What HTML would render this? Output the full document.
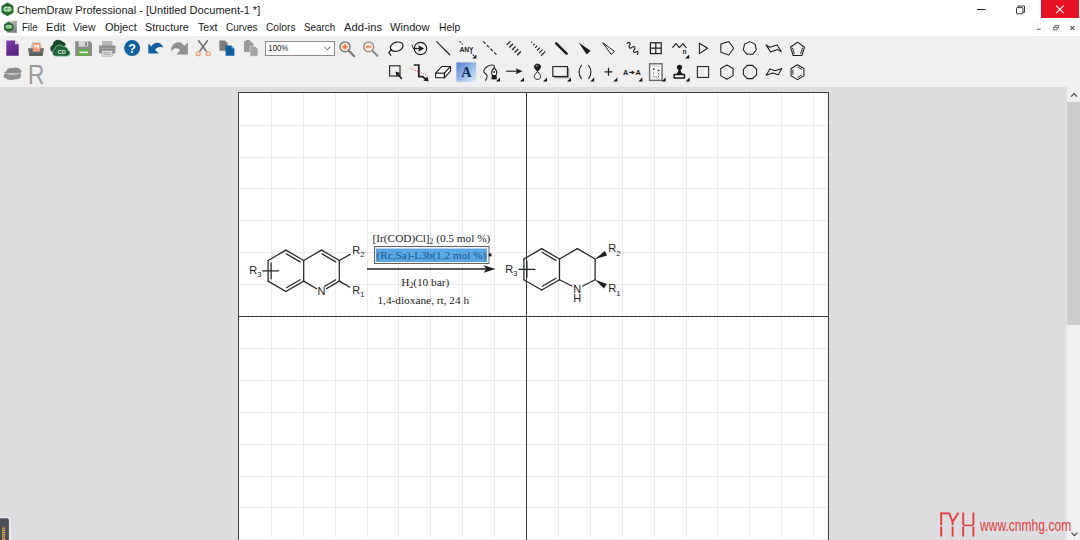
<!DOCTYPE html>
<html lang="en">
<head>
<meta charset="utf-8">
<title>ChemDraw Professional - [Untitled Document-1 *]</title>
<style>
*{box-sizing:border-box;margin:0;padding:0}
html,body{width:1080px;height:540px;overflow:hidden;background:#dddcde;font-family:"Liberation Sans",sans-serif;color:#111}
#app{position:relative;width:1080px;height:540px;overflow:hidden}
.abs{position:absolute}
#titlebar{left:0;top:0;width:1080px;height:19px;background:#fff}
#titletext{left:16.6px;top:2.5px;font-size:11.5px;line-height:15px;color:#1a1a1a;white-space:nowrap;transform-origin:0 50%;transform:scaleX(0.961)}
#menubar{left:0;top:19px;width:1080px;height:17px;background:#fff}
.mi{position:absolute;top:1px;font-size:11.5px;line-height:15px;color:#1a1a1a;white-space:nowrap;transform-origin:0 50%}
#toolbars{left:0;top:36px;width:1080px;height:51px;background:#f0f0f1}
#work{left:0;top:87px;width:1066px;height:453px;background:#dddcde}
#vscroll{left:1066px;top:87px;width:14px;height:453px;background:#f0f0f1}
#vthumb{left:1067px;top:102px;width:13px;height:223px;background:#cdcccf}
#page{left:238px;top:92px;width:591px;height:460px;background:#fff;border:1px solid #3f3f3f}
#closebtn{left:1040.5px;top:0;width:38.2px;height:17.6px;background:#e81123}
svg{position:absolute;left:0;top:0;overflow:visible}
</style>
</head>
<body>
<div id="app">
  <div id="titlebar" class="abs"></div>
  <div id="titletext" class="abs">ChemDraw Professional - [Untitled Document-1 *]</div>
  <div id="closebtn" class="abs"></div>
  <div id="menubar" class="abs">
    <span class="mi" style="left:22px;transform:scaleX(0.836)">File</span>
    <span class="mi" style="left:46.25px;transform:scaleX(0.971)">Edit</span>
    <span class="mi" style="left:73.25px;transform:scaleX(0.91)">View</span>
    <span class="mi" style="left:104.5px;transform:scaleX(0.955)">Object</span>
    <span class="mi" style="left:145px;transform:scaleX(0.937)">Structure</span>
    <span class="mi" style="left:197.5px;transform:scaleX(0.924)">Text</span>
    <span class="mi" style="left:225.5px;transform:scaleX(0.864)">Curves</span>
    <span class="mi" style="left:265.5px;transform:scaleX(0.888)">Colors</span>
    <span class="mi" style="left:303.75px;transform:scaleX(0.858)">Search</span>
    <span class="mi" style="left:343.75px;transform:scaleX(0.974)">Add-ins</span>
    <span class="mi" style="left:390px;transform:scaleX(0.966)">Window</span>
    <span class="mi" style="left:438.75px;transform:scaleX(0.898)">Help</span>
  </div>
  <div id="toolbars" class="abs"></div>
  <div id="work" class="abs"></div>
  <div id="vscroll" class="abs"></div>
  <div id="vthumb" class="abs"></div>
  <div id="page" class="abs"></div>

  <!-- GRID -->
  <svg id="grid" width="1080" height="540" viewBox="0 0 1080 540">
    <g stroke="#ece9f2" stroke-width="1" shape-rendering="crispEdges">
      <line x1="271.5" y1="93" x2="271.5" y2="540"/>
      <line x1="303.5" y1="93" x2="303.5" y2="540"/>
      <line x1="335.5" y1="93" x2="335.5" y2="540"/>
      <line x1="367.5" y1="93" x2="367.5" y2="540"/>
      <line x1="398.5" y1="93" x2="398.5" y2="540"/>
      <line x1="430.5" y1="93" x2="430.5" y2="540"/>
      <line x1="462.5" y1="93" x2="462.5" y2="540"/>
      <line x1="494.5" y1="93" x2="494.5" y2="540"/>
      <line x1="558.5" y1="93" x2="558.5" y2="540"/>
      <line x1="590.5" y1="93" x2="590.5" y2="540"/>
      <line x1="622.5" y1="93" x2="622.5" y2="540"/>
      <line x1="654.5" y1="93" x2="654.5" y2="540"/>
      <line x1="686.5" y1="93" x2="686.5" y2="540"/>
      <line x1="717.5" y1="93" x2="717.5" y2="540"/>
      <line x1="749.5" y1="93" x2="749.5" y2="540"/>
      <line x1="781.5" y1="93" x2="781.5" y2="540"/>
      <line x1="813.5" y1="93" x2="813.5" y2="540"/>
      <line x1="239" y1="125.5" x2="828" y2="125.5"/>
      <line x1="239" y1="157.5" x2="828" y2="157.5"/>
      <line x1="239" y1="188.5" x2="828" y2="188.5"/>
      <line x1="239" y1="220.5" x2="828" y2="220.5"/>
      <line x1="239" y1="252.5" x2="828" y2="252.5"/>
      <line x1="239" y1="284.5" x2="828" y2="284.5"/>
      <line x1="239" y1="348.5" x2="828" y2="348.5"/>
      <line x1="239" y1="380.5" x2="828" y2="380.5"/>
      <line x1="239" y1="412.5" x2="828" y2="412.5"/>
      <line x1="239" y1="444.5" x2="828" y2="444.5"/>
      <line x1="239" y1="476.5" x2="828" y2="476.5"/>
      <line x1="239" y1="507.5" x2="828" y2="507.5"/>
      <line x1="239" y1="539.5" x2="828" y2="539.5"/>
    </g>
    <g stroke="#f3f2f6" fill="none">
      <line x1="239" y1="316.5" x2="828" y2="316.5" stroke-width="7" stroke-dasharray="1 3.4"/>
    </g>
    <g stroke="#3c3c3c" stroke-width="1" shape-rendering="crispEdges">
      <line x1="526.5" y1="93" x2="526.5" y2="540"/>
      <line x1="239" y1="316.5" x2="828" y2="316.5"/>
    </g>
  </svg>

  <!-- CHEM -->
  <svg id="chem" width="1080" height="540" viewBox="0 0 1080 540">
    <g stroke="#262626" stroke-width="1.25" stroke-linecap="round" fill="#1e1e1e" font-family="'Liberation Sans',sans-serif">
    <line x1="285.90" y1="250.10" x2="303.70" y2="260.45"/>
    <line x1="303.70" y1="260.45" x2="303.70" y2="281.15"/>
    <line x1="303.70" y1="281.15" x2="285.90" y2="291.50"/>
    <line x1="285.90" y1="291.50" x2="268.10" y2="281.15"/>
    <line x1="268.10" y1="281.15" x2="268.10" y2="260.45"/>
    <line x1="268.10" y1="260.45" x2="285.90" y2="250.10"/>
    <line x1="286.47" y1="253.90" x2="300.12" y2="261.84"/>
    <line x1="271.10" y1="278.75" x2="271.10" y2="262.85"/>
    <line x1="300.12" y1="279.76" x2="286.47" y2="287.70"/>
    <line x1="303.70" y1="260.45" x2="321.50" y2="250.10"/>
    <line x1="321.50" y1="250.10" x2="339.30" y2="260.45"/>
    <line x1="339.30" y1="260.45" x2="339.30" y2="281.15"/>
    <line x1="322.07" y1="253.90" x2="335.72" y2="261.84"/>
    <line x1="339.30" y1="281.15" x2="326.34" y2="288.69"/>
    <line x1="335.72" y1="279.76" x2="324.66" y2="286.19"/>
    <line x1="303.70" y1="281.15" x2="316.66" y2="288.69"/>
    <text x="321.50" y="294.50" font-size="11" text-anchor="middle" stroke="none">N</text>
    <line x1="339.30" y1="260.45" x2="350.20" y2="254.40"/>
    <line x1="339.30" y1="281.15" x2="349.80" y2="287.30"/>
    <line x1="262.70" y1="270.80" x2="278.80" y2="270.80"/>
    <g stroke="none">
    <text x="352.20" y="253.90" font-size="11">R<tspan font-size="7.6" dy="3.3">2</tspan></text>
    <text x="352.20" y="294.10" font-size="11">R<tspan font-size="7.6" dy="3.3">1</tspan></text>
    <text x="249.30" y="274.00" font-size="11">R<tspan font-size="7.6" dy="3.3">3</tspan></text>
    </g>
    <line x1="541.70" y1="248.65" x2="559.50" y2="259.00"/>
    <line x1="559.50" y1="259.00" x2="559.50" y2="279.70"/>
    <line x1="559.50" y1="279.70" x2="541.70" y2="290.05"/>
    <line x1="541.70" y1="290.05" x2="523.90" y2="279.70"/>
    <line x1="523.90" y1="279.70" x2="523.90" y2="259.00"/>
    <line x1="523.90" y1="259.00" x2="541.70" y2="248.65"/>
    <line x1="542.27" y1="252.45" x2="555.92" y2="260.39"/>
    <line x1="526.90" y1="277.30" x2="526.90" y2="261.40"/>
    <line x1="555.92" y1="278.31" x2="542.27" y2="286.25"/>
    <line x1="559.50" y1="259.00" x2="577.30" y2="248.65"/>
    <line x1="577.30" y1="248.65" x2="595.10" y2="259.00"/>
    <line x1="595.10" y1="259.00" x2="595.10" y2="279.70"/>
    <line x1="595.10" y1="279.70" x2="582.81" y2="286.05"/>
    <line x1="559.50" y1="279.70" x2="571.79" y2="286.05"/>
    <text x="577.30" y="292.80" font-size="11" text-anchor="middle" stroke="none">N</text>
    <text x="577.30" y="302.30" font-size="11" text-anchor="middle" stroke="none">H</text>
    <polygon points="595.10,259.00 607.20,255.60 604.80,251.00" fill="#1e1e1e" stroke="none"/>
    <polygon points="595.10,279.70 604.00,288.49 606.80,284.11" fill="#1e1e1e" stroke="none"/>
    <line x1="519.00" y1="269.40" x2="534.80" y2="269.40"/>
    <g stroke="none">
    <text x="608.20" y="252.20" font-size="11">R<tspan font-size="7.6" dy="3.3">2</tspan></text>
    <text x="608.20" y="292.40" font-size="11">R<tspan font-size="7.6" dy="3.3">1</tspan></text>
    <text x="505.20" y="273.00" font-size="11">R<tspan font-size="7.6" dy="3.3">3</tspan></text>
    </g>
    </g>
    <line x1="367" y1="269" x2="488" y2="269" stroke="#1e1e1e" stroke-width="1.3"/>
    <path d="M495.6,269 L483.6,265.2 L486.4,269 L483.6,272.8 Z" fill="#1e1e1e"/>
    <g font-family="'Liberation Serif',serif" font-size="11.3" fill="#222">
    <text x="372.6" y="242" textLength="117.7" lengthAdjust="spacingAndGlyphs">[Ir(COD)Cl]<tspan font-size="7.5" dy="2">2</tspan><tspan dy="-2"> (0.5 mol %)</tspan></text>
    <rect x="374.5" y="246.5" width="114.5" height="17" fill="#eef4fb" stroke="#555" stroke-width="0.9"/>
    <rect x="376.2" y="249" width="110.5" height="12.6" fill="#5ca8e3" stroke="#4a90cf" stroke-width="0.6"/>
    <rect x="488.8" y="253.4" width="2.6" height="3" fill="#111"/>
    <text x="376.6" y="259.2" textLength="109.7" lengthAdjust="spacingAndGlyphs" fill="#1b578f">(Rc,Sa)-L3b(1.2 mol %)</text>
    <text x="401.2" y="286.4" textLength="48.2" lengthAdjust="spacingAndGlyphs">H<tspan font-size="7.5" dy="2">2</tspan><tspan dy="-2">(10 bar)</tspan></text>
    <text x="377.4" y="304" textLength="91.8" lengthAdjust="spacingAndGlyphs">1,4-dioxane, rt, 24 h</text>
    </g>
  </svg>

  <!-- ICONS -->
  <svg id="icons" width="1080" height="540" viewBox="0 0 1080 540">
<!--IC1-->
    <defs>
      <linearGradient id="gPurple" x1="0" y1="0" x2="0.3" y2="1"><stop offset="0" stop-color="#7a3fa3"/><stop offset="0.6" stop-color="#6a2c94"/><stop offset="1" stop-color="#5a2082"/></linearGradient>
      <linearGradient id="gSel" x1="0" y1="0" x2="1" y2="1"><stop offset="0" stop-color="#4f78d6"/><stop offset="0.55" stop-color="#9fc0ea"/><stop offset="1" stop-color="#dfeaf7"/></linearGradient>
      <linearGradient id="gDoc" x1="0" y1="0" x2="1" y2="1"><stop offset="0" stop-color="#e0e0e0"/><stop offset="1" stop-color="#6e6e6e"/></linearGradient>
    </defs>
    <!-- app icon (title bar) -->
    <g id="appicon">
      <polygon points="7.5,3.1 12.9,6.2 12.9,12.4 7.5,15.5 2.1,12.4 2.1,6.2" fill="#22602a" stroke="#2d6e33" stroke-width="1.2" stroke-linejoin="round"/>
      <ellipse cx="7.5" cy="9.3" rx="4.3" ry="3.2" fill="#58a55b"/>
      <text x="7.5" y="11.1" font-family="'Liberation Sans',sans-serif" font-size="5.2" font-weight="bold" fill="#eef8ee" text-anchor="middle">CD</text>
    </g>
    <!-- menu doc icon -->
    <g id="docicon">
      <rect x="6.8" y="20.8" width="10" height="12" fill="url(#gDoc)"/>
      <polygon points="8.7,22.2 13,24.6 13,29.4 8.7,31.8 4.4,29.4 4.4,24.6" fill="#22602a" stroke="#2d6e33" stroke-width="1" stroke-linejoin="round"/>
      <ellipse cx="8.7" cy="27" rx="3.4" ry="2.5" fill="#58a55b"/>
      <text x="8.7" y="28.4" font-family="'Liberation Sans',sans-serif" font-size="4" font-weight="bold" fill="#eef8ee" text-anchor="middle">CD</text>
    </g>
    <!-- window controls -->
    <g id="winctl" fill="none" stroke="#222" stroke-width="1">
      <line x1="977" y1="9.5" x2="985.6" y2="9.5"/>
      <path d="M1018,7.5 V6 H1024.5 V12.3 H1023" stroke-width="0.9"/>
      <rect x="1016.5" y="7.6" width="6.4" height="6.2" rx="0.8" stroke-width="0.9"/>
      <path d="M1056,5.6 L1063.6,13.2 M1063.6,5.6 L1056,13.2" stroke="#fff" stroke-width="1.1"/>
    </g>
    <g id="mdictl" fill="none" stroke="#555" stroke-width="1">
      <rect x="1032" y="21" width="13" height="13" fill="#fcfcfc" stroke="none"/>
      <rect x="1049" y="21" width="13" height="13" fill="#fcfcfc" stroke="none"/>
      <rect x="1066" y="21" width="13" height="13" fill="#fcfcfc" stroke="none"/>
      <line x1="1037" y1="29.3" x2="1040.6" y2="29.3"/>
      <path d="M1053.4,27.4 h3.6 v2.6 h-3.6 z M1054.8,27.2 v-1.6 h3.6 v2.6 h-1.2" stroke-width="0.8"/>
      <path d="M1070.4,25.8 L1074.4,29.8 M1074.4,25.8 L1070.4,29.8" stroke-width="1.1"/>
    </g>

    <!-- ===== Toolbar row 1 : left group ===== -->
    <!-- new -->
    <path d="M6.3,40.6 H15 L18.7,44.3 V55.8 H6.3 Z" fill="url(#gPurple)"/>
    <path d="M15,40.6 V44.3 H18.7 Z" fill="#e4d3f0"/>
    <!-- open -->
    <g>
      <path d="M30.2,48.4 L32.2,42.2 H40.4 L42.4,48.4 Z" fill="#c2c2c2"/>
      <path d="M27.8,48.2 H44.1 L42.5,55.8 H29.4 Z" fill="#6c6c6c"/>
      <path d="M29.2,53.4 H42.8 L42.5,55.8 H29.4 Z" fill="#585858"/>
      <rect x="32.8" y="43" width="7.4" height="8.6" fill="#f2a078"/>
      <path d="M34.2,45.4 h2 v1.6 h-2 M37.2,45 l1.6,3.6 M38.8,45 l-1.6,3.6" stroke="#fff" stroke-width="0.9" fill="none"/>
    </g>
    <!-- cloud -->
    <g>
      <path d="M53.4,52.6 a4,4 0 0 1 -0.6,-7.6 a5.6,5.6 0 0 1 9.6,-3.6 a4.4,4.4 0 0 1 3.4,3.2 L60,52.6 Z" fill="#174b2d"/>
      <path transform="translate(-0.9,0)" d="M56.6,56.2 a3.6,3.6 0 0 1 -0.9,-7 a4.8,4.8 0 0 1 8.3,-2.6 a4.2,4.2 0 0 1 5,3.6 a3.1,3.1 0 0 1 -1,6 Z" fill="#1f6139" stroke="#9bd3b0" stroke-width="0.7"/>
      <text x="61.8" y="53.6" font-family="'Liberation Sans',sans-serif" font-size="5.6" font-weight="bold" fill="#d6ecdc" text-anchor="middle">CD</text>
    </g>
    <!-- save -->
    <g>
      <path d="M75.2,41.2 H90 L92,43.2 V56 H75.2 Z" fill="#8b8b8b"/>
      <rect x="78.6" y="41.2" width="9.6" height="5.4" fill="#d9d9d9"/>
      <rect x="85" y="42" width="2" height="3.8" fill="#8b8b8b"/>
      <rect x="77.6" y="49" width="12" height="7" fill="#6aa84f"/>
      <rect x="79.4" y="51.6" width="8.4" height="1.6" fill="#e6f2e0"/>
    </g>
    <!-- print -->
    <g>
      <rect x="102" y="41" width="10.4" height="5.6" fill="#b9b9b9"/>
      <rect x="99" y="45.6" width="16.4" height="7.8" rx="1" fill="#8d8d8d"/>
      <rect x="99" y="47.8" width="16.4" height="1" fill="#a9a9a9"/>
      <rect x="102" y="50.6" width="10.4" height="5.6" fill="#dcdcdc" stroke="#9a9a9a" stroke-width="0.5"/>
      <path d="M103.6,52.6 h7.2 M103.6,54.4 h7.2" stroke="#9a9a9a" stroke-width="0.7"/>
    </g>
    <!-- help -->
    <circle cx="132.1" cy="48.1" r="8" fill="#0d609f"/>
    <text x="132.1" y="52.6" font-family="'Liberation Sans',sans-serif" font-size="12.5" font-weight="bold" fill="#fff" text-anchor="middle">?</text>
    <!-- undo -->
    <path d="M148.3,43.4 V53.6 H158.8 L155.2,50 C156.2,47.4 159.4,46.4 163.4,47.6 C162,43.6 157.6,41.4 153.8,43.8 C152.6,44.6 151.8,45.6 151.4,46.6 Z" fill="#1060a2"/>
    <!-- redo -->
    <path d="M187.9,42.4 V54.5 H176.2 L180.2,50.4 C178.6,48 175.6,47.6 172.6,49.8 C171.4,50.8 171.2,52 171.4,52.6 C170.2,47.6 173,43 177.6,42.2 C180.6,41.8 183,43.4 184.2,46 Z" fill="#8f8f8f"/>
    <!-- cut -->
    <g fill="none">
      <path d="M198.3,40.2 L206.6,51.6 M207.8,40.2 L199.4,51.6" stroke="#6b6b6b" stroke-width="1.5"/>
      <circle cx="198.2" cy="53.8" r="2" stroke="#ee9a6a" stroke-width="1.1" fill="#fbe9de"/>
      <circle cx="208.2" cy="53.8" r="2" stroke="#ee9a6a" stroke-width="1.1" fill="#fbe9de"/>
    </g>
    <!-- copy -->
    <g>
      <path d="M219.4,40.6 H225 L227.6,43.2 V50.8 H219.4 Z" fill="#7c7c7c"/>
      <path d="M225.6,45.6 H231.6 L234.4,48.4 V55.8 H225.6 Z" fill="#115f9f"/>
      <path d="M231.6,45.6 V48.4 H234.4 Z" fill="#7fb2dc"/>
    </g>
    <!-- paste (disabled) -->
    <g fill="#9a9a9a">
      <path d="M244,41 H250.4 L253.6,44 V52 H244 Z"/>
      <path d="M250,46.4 H255.4 L258,49 V56.2 H250 Z" fill="#a6a6a6" stroke="#f0f0f1" stroke-width="0.5"/>
      <path d="M246,40 h4 v1.6 h-4z"/>
    </g>
    <!-- zoom combo -->
    <rect x="265.5" y="41.5" width="69" height="14" fill="#fff" stroke="#8c8c8c" stroke-width="1"/>
    <text x="268.3" y="51.2" font-family="'Liberation Sans',sans-serif" font-size="9.8" fill="#222" textLength="20" lengthAdjust="spacingAndGlyphs">100%</text>
    <path d="M324.4,46.8 L327.4,49.8 L330.4,46.8" fill="none" stroke="#555" stroke-width="1"/>
    <!-- zoom in -->
    <g>
      <path d="M349,51 L354.2,56.2" stroke="#777" stroke-width="2.2" stroke-linecap="round"/>
      <circle cx="345" cy="46.8" r="5" fill="#fbe6da" stroke="#6f6f6f" stroke-width="1.3"/>
      <path d="M342.2,46.8 H347.8 M345,44 V49.6" stroke="#e8632a" stroke-width="1.3"/>
    </g>
    <!-- zoom out -->
    <g>
      <path d="M372.6,51 L377.4,55.8" stroke="#8a8a8a" stroke-width="2.2" stroke-linecap="round"/>
      <circle cx="368.7" cy="46.8" r="5" fill="#fbe6da" stroke="#8a8a8a" stroke-width="1.3"/>
      <path d="M366,46.8 H371.4" stroke="#e8632a" stroke-width="1.3"/>
    </g>
    <!-- row 2 left : disabled cloud + R -->
    <path d="M7,70.6 C6.4,68.6 9.6,67.6 12.4,68 C15,66.8 19.6,67.4 20,69.6 C22.2,70.4 22,72.8 20,73.4 L7.4,73.4 C5.4,73 5.4,71 7,70.6 Z" fill="#8d8d8d"/>
    <path d="M4.6,74.2 C3,75.2 3.2,77.6 5.6,78 C7,80 12,80.4 15,79.2 C18.6,79.6 21.6,78 21,75.6 C21.6,74.6 21,73.8 20,73.6 C16,75.2 9,75.2 5.6,73.6 C5,73.6 4.6,73.8 4.6,74.2 Z" fill="#8d8d8d"/>
    <path d="M3.6,72.6 L7,71 L7.4,73.6 Z" fill="#8d8d8d"/>
    <text x="27.9" y="83.6" font-family="'Liberation Sans',sans-serif" font-size="27" fill="#9d9b9b" textLength="16.4" lengthAdjust="spacingAndGlyphs">R</text>
<!--/IC1-->
<!--IC2-->
    <g fill="none" stroke="#1c1c1c" stroke-width="1.15" stroke-linecap="round" stroke-linejoin="round">
    <ellipse cx="396.7" cy="46.7" rx="6.5" ry="4.5" transform="rotate(-18 396.7 46.7)"/>
    <path d="M391.2,49.8 L388.7,52.6 L390.9,55.3"/>
    <circle cx="391.3" cy="49.9" r="0.9" fill="#1c1c1c" stroke="none"/>
    </g>
    <g fill="none" stroke="#1c1c1c" stroke-width="1.15">
    <circle cx="420.5" cy="48.5" r="6.2"/>
    <path d="M413,48.5 H419.4" stroke-width="1.3"/>
    <path d="M424.2,48.5 L418.2,45.3 L419.2,48.5 L418.2,51.7 Z" fill="#1c1c1c" stroke="none"/>
    <path d="M412.2,44.8 C412.2,46.4 412.8,47.6 413.8,48.4" stroke-width="1"/>
    </g>
    <path d="M436.4,41.4 L450,55" stroke="#1c1c1c" stroke-width="1.1" fill="none"/>
    <path d="M459.6,41.4 L462.6,44.4 M470.6,52.4 L474.4,56.2" stroke="#1c1c1c" stroke-width="1.1" stroke-dasharray="1.8,1.2" fill="none"/>
    <text x="459.4" y="51.6" font-family="'Liberation Sans',sans-serif" font-weight="bold" font-size="7" fill="#1c1c1c" textLength="14.2" lengthAdjust="spacingAndGlyphs">ANY</text>
    <path d="M476.4,58.4 h-4.0 l4.0,-4.0 z" fill="#111"/>
    <path d="M483.2,41.4 L497,55.2" stroke="#1c1c1c" stroke-width="1.1" stroke-dasharray="3.2,2.0" fill="none"/>
    <line x1="510.44" y1="41.16" x2="506.76" y2="44.84" stroke="#1c1c1c" stroke-width="1.25"/>
    <line x1="513.04" y1="43.76" x2="509.36" y2="47.44" stroke="#1c1c1c" stroke-width="1.25"/>
    <line x1="515.64" y1="46.36" x2="511.96" y2="50.04" stroke="#1c1c1c" stroke-width="1.25"/>
    <line x1="518.24" y1="48.96" x2="514.56" y2="52.64" stroke="#1c1c1c" stroke-width="1.25"/>
    <line x1="520.84" y1="51.56" x2="517.16" y2="55.24" stroke="#1c1c1c" stroke-width="1.25"/>
    <line x1="531.95" y1="41.84" x2="531.25" y2="42.56" stroke="#1c1c1c" stroke-width="1.1"/>
    <line x1="534.62" y1="43.77" x2="533.22" y2="45.19" stroke="#1c1c1c" stroke-width="1.1"/>
    <line x1="537.29" y1="45.69" x2="535.19" y2="47.83" stroke="#1c1c1c" stroke-width="1.1"/>
    <line x1="539.96" y1="47.61" x2="537.16" y2="50.47" stroke="#1c1c1c" stroke-width="1.1"/>
    <line x1="542.63" y1="49.54" x2="539.13" y2="53.10" stroke="#1c1c1c" stroke-width="1.1"/>
    <line x1="545.30" y1="51.46" x2="541.10" y2="55.74" stroke="#1c1c1c" stroke-width="1.1"/>
    <path d="M556.2,43.4 L566.6,53.6" stroke="#1c1c1c" stroke-width="2.6" stroke-linecap="round" fill="none"/>
    <path d="M578.6,42.4 L590.6,50.8 L586.6,54.6 Z" fill="#1c1c1c"/>
    <path d="M602.6,42.6 L614.4,51.4 L611.2,54.4 Z" fill="none" stroke="#1c1c1c" stroke-width="1" stroke-linejoin="round"/>
    <path d="M627,43.4 C629.2,41.2 631.4,43.4 629.6,45.6 C627.8,47.8 630.6,49 632.4,47.2 C634.4,45.4 636,47.6 634.2,49.6 C632.4,51.6 634.6,53.4 636.6,51.6 C638,50.6 638.6,52.6 637.4,54.4" fill="none" stroke="#1c1c1c" stroke-width="1.1" stroke-linecap="round"/>
    <g fill="none" stroke="#1c1c1c" stroke-width="1.2"><rect x="650.4" y="42.8" width="10.8" height="10.8"/><path d="M655.8,42.8 V53.6 M650.4,48.2 H661.2"/></g>
    <path d="M672.4,47.6 L676,43.6 L679.4,47.6 L683,43.6 L686.4,48" fill="none" stroke="#1c1c1c" stroke-width="1.1" stroke-linejoin="round"/>
    <text x="682.6" y="54" font-family="'Liberation Sans',sans-serif" font-weight="bold" font-size="6.6" fill="#1c1c1c">n</text>
    <path d="M689.2,58.4 h-4.0 l4.0,-4.0 z" fill="#111"/>
    <polygon points="699.4,43.2 699.4,53.6 707.6,48.2" fill="none" stroke="#1c1c1c" stroke-width="1.05" stroke-linejoin="round"/>
    <polygon points="733.70,48.20 728.79,54.95 720.86,52.37 720.86,44.03 728.79,41.45" fill="none" stroke="#1c1c1c" stroke-width="1.05" stroke-linejoin="round" />
    <polygon points="749.80,41.60 755.04,44.12 756.33,49.79 752.71,54.34 746.89,54.34 743.27,49.79 744.56,44.12" fill="none" stroke="#1c1c1c" stroke-width="1.05" stroke-linejoin="round" />
    <polygon points="766.1,44.9 770.6,52 777.4,49.4 781.4,51.8 777.2,44.9 769.8,47.3" fill="none" stroke="#1c1c1c" stroke-width="1.05" stroke-linejoin="round"/>
    <polygon points="797.50,42.10 804.54,47.21 801.85,55.49 793.15,55.49 790.46,47.21" fill="none" stroke="#1c1c1c" stroke-width="1.05" stroke-linejoin="round" />
    <line x1="802.55" y1="47.83" x2="800.60" y2="53.82" stroke="#1c1c1c" stroke-width="0.95"/>
    <line x1="794.40" y1="53.82" x2="792.45" y2="47.83" stroke="#1c1c1c" stroke-width="0.95"/>
<!--/IC2-->
<!--IC3-->
    <rect x="389.6" y="65.8" width="10.4" height="10.2" fill="none" stroke="#1c1c1c" stroke-width="1.1"/>
    <path d="M395.4,71.4 L400.2,73 L398.8,74.2 L402.4,78.4 L401.2,79.4 L397.8,75.2 L396.6,76.6 Z" fill="#1c1c1c"/>
    <path d="M410.4,68.2 L427.6,75.6" stroke="#d9534f" stroke-width="0.9" stroke-dasharray="1.2,1.1" fill="none"/>
    <path d="M413.8,65 H418.8 V76.6 H422.6 L426,79.4" fill="none" stroke="#1c1c1c" stroke-width="1.7" stroke-linejoin="miter"/>
    <path d="M428.6,81.4 L423.4,80.4 L427.4,76.6 Z" fill="#1c1c1c"/>
    <g fill="#fff" stroke="#1c1c1c" stroke-width="1.05" stroke-linejoin="round">
    <path d="M435.6,73.2 L442,66.4 L450.6,66.4 L444.4,73.2 Z"/>
    <path d="M435.6,73.2 H444.4 V77.8 H435.6 Z"/>
    <path d="M444.4,73.2 L450.6,66.4 V70.8 L444.4,77.8 Z"/>
    </g>
    <rect x="456.4" y="62.4" width="19.8" height="19.4" fill="url(#gSel)"/>
    <text x="466.3" y="76.8" font-family="'Liberation Serif',serif" font-weight="bold" font-size="14.2" fill="#0b2a57" text-anchor="middle">A</text>
    <g fill="none" stroke="#1c1c1c" stroke-width="1.05" stroke-linecap="round" transform="translate(0.6,0)">
    <path d="M492.4,65 C488,64.6 484.4,67.6 483.2,70.6 C482.4,73 485.6,73 486.4,75.4 C487,77.4 485.4,79 485,80.4"/>
    <path d="M493.6,65.4 V68"/>
    <path d="M493.6,68 C491,70.4 490.6,73.4 492,75.6 H495.2 C496.6,73.4 496.2,70.4 493.6,68 Z" fill="#fff"/>
    <circle cx="493.6" cy="72" r="0.9" fill="#1c1c1c" stroke="none"/>
    <rect x="491" y="76" width="5.2" height="3.4" fill="#1c1c1c" stroke="none"/>
    </g>
    <path d="M500,81.4 h-4.0 l4.0,-4.0 z" fill="#111"/>
    <path d="M506.2,71.2 H518" stroke="#1c1c1c" stroke-width="1.1" fill="none"/>
    <path d="M522.6,71.2 L515.6,68.2 L517,71.2 L515.6,74.2 Z" fill="#1c1c1c"/>
    <path d="M524,81.4 h-4.0 l4.0,-4.0 z" fill="#111"/>
    <path d="M537.5,71.6 C535.4,69.4 534.3,68.2 534.3,66.8 C534.3,65 535.7,63.9 537.5,63.9 C539.3,63.9 540.7,65 540.7,66.8 C540.7,68.2 539.6,69.4 537.5,71.6 Z" fill="#1c1c1c" stroke="#1c1c1c" stroke-width="0.6"/>
    <ellipse cx="536.8" cy="66" rx="1" ry="0.8" fill="#bbb"/>
    <path d="M537.5,71.6 C535.4,73.8 534.4,75.2 534.4,76.6 C534.4,78.4 535.7,79.4 537.5,79.4 C539.3,79.4 540.6,78.4 540.6,76.6 C540.6,75.2 539.6,73.8 537.5,71.6 Z" fill="none" stroke="#1c1c1c" stroke-width="1"/>
    <path d="M547,81.4 h-4.0 l4.0,-4.0 z" fill="#111"/>
    <path d="M554,77.4 H568.4 V68" fill="none" stroke="#8a8a8a" stroke-width="1.6"/>
    <rect x="552.8" y="66.6" width="14.6" height="9.8" fill="#f4f4f5" stroke="#1c1c1c" stroke-width="1.1"/>
    <path d="M571,81.4 h-4.0 l4.0,-4.0 z" fill="#111"/>
    <path d="M581.6,65 C578.4,69.4 578.4,74.6 581.6,79 M588.4,65 C591.6,69.4 591.6,74.6 588.4,79" fill="none" stroke="#1c1c1c" stroke-width="1.1"/>
    <path d="M594.2,81.4 h-4.0 l4.0,-4.0 z" fill="#111"/>
    <path d="M604.6,71.8 H612.4 M608.5,67.8 V75.8" fill="none" stroke="#1c1c1c" stroke-width="1.2"/>
    <path d="M617.4,81.4 h-4.0 l4.0,-4.0 z" fill="#111"/>
    <text x="623" y="74.6" font-family="'Liberation Sans',sans-serif" font-weight="bold" font-size="7.4" fill="#1c1c1c">A</text>
    <text x="635.4" y="74.6" font-family="'Liberation Sans',sans-serif" font-weight="bold" font-size="7.4" fill="#1c1c1c">A</text>
    <path d="M629.2,72.4 H632.4" stroke="#1c1c1c" stroke-width="1.2" fill="none"/><path d="M634.8,72.4 L631.8,70.4 V74.4 Z" fill="#1c1c1c"/>
    <path d="M642.4,81.4 h-4.0 l4.0,-4.0 z" fill="#111"/>
    <rect x="649.6" y="63.8" width="12.4" height="16.6" fill="#fafafa" stroke="#6a6a6a" stroke-width="1.4"/>
    <path d="M652.4,66 h7 M652.4,78 h7" stroke="#555" stroke-width="0.6" stroke-dasharray="0.8,0.9" fill="none"/>
    <g fill="#1c1c1c"><rect x="653" y="68.4" width="1.6" height="1.4"/><rect x="657.6" y="69.8" width="1.8" height="1.4"/><rect x="653.2" y="72.6" width="1" height="1"/><rect x="658" y="73.4" width="1" height="1"/><rect x="653.2" y="75.6" width="0.9" height="0.9"/><rect x="655.6" y="76" width="0.9" height="0.9"/><rect x="658" y="76" width="0.9" height="0.9"/></g>
    <path d="M665.6,81.4 h-4.0 l4.0,-4.0 z" fill="#111"/>
    <circle cx="679.5" cy="67.3" r="2.6" fill="#1c1c1c"/>
    <path d="M678.5,69 H680.5 L680.9,71.8 L682.6,73.9 H676.4 L678.1,71.8 Z" fill="#1c1c1c"/>
    <rect x="673.4" y="73.7" width="11.8" height="5.1" rx="1" fill="#1c1c1c"/>
    <rect x="674.9" y="75.3" width="8.8" height="1.9" fill="#fff"/>
    <path d="M689.6,81.4 h-4.0 l4.0,-4.0 z" fill="#111"/>
    <rect x="697.4" y="66.6" width="11.2" height="10.8" fill="none" stroke="#1c1c1c" stroke-width="1.05"/>
    <polygon points="726.90,65.00 733.05,68.55 733.05,75.65 726.90,79.20 720.75,75.65 720.75,68.55" fill="none" stroke="#1c1c1c" stroke-width="1.05" stroke-linejoin="round"/>
    <polygon points="752.74,65.39 756.61,69.26 756.61,74.74 752.74,78.61 747.26,78.61 743.39,74.74 743.39,69.26 747.26,65.39" fill="none" stroke="#1c1c1c" stroke-width="1.05" stroke-linejoin="round"/>
    <polygon points="766.1,75.2 770.1,68.9 775,70.7 781.8,68.4 778.3,74.7 772.8,72.9" fill="none" stroke="#1c1c1c" stroke-width="1.05" stroke-linejoin="round"/>
    <polygon points="797.50,64.80 803.91,68.50 803.91,75.90 797.50,79.60 791.09,75.90 791.09,68.50" fill="none" stroke="#1c1c1c" stroke-width="1.05" stroke-linejoin="round"/>
    <line x1="797.73" y1="67.01" x2="801.88" y2="69.41" stroke="#1c1c1c" stroke-width="0.95"/>
    <line x1="801.88" y1="74.99" x2="797.73" y2="77.39" stroke="#1c1c1c" stroke-width="0.95"/>
    <line x1="792.89" y1="74.60" x2="792.89" y2="69.80" stroke="#1c1c1c" stroke-width="0.95"/>
<!--/IC3-->
  </svg>
  <!-- MISC: scrollbar arrows, watermark, widget -->
  <svg id="misc" width="1080" height="540" viewBox="0 0 1080 540">
    <rect x="1066" y="87" width="1" height="453" fill="#e6e5e8"/>
    <path d="M1071,96.6 L1074,93.6 L1077,96.6" fill="none" stroke="#4a4a4a" stroke-width="1.3"/>
    <path d="M1071.4,532.6 L1074.4,535.6 L1077.4,532.6" fill="none" stroke="#4a4a4a" stroke-width="1.3"/>
    <!-- watermark logo -->
    <g stroke="#e2403f" stroke-width="1.9" fill="none" stroke-linecap="butt">
      <path d="M941.2,512.6 V525 M941.2,526.6 V536.4"/>
      <path d="M940.4,513.4 H949.6"/>
      <path d="M949.2,513 L952.6,521.8 L958.4,512.8"/>
      <path d="M952.6,521.8 V525 M952.6,526.6 V536.4"/>
      <path d="M963.2,512.6 V525 M963.2,526.6 V536.4"/>
      <path d="M973.4,512.6 V525 M973.4,526.6 V536.4"/>
      <path d="M963.2,525.4 H973.4" stroke-width="1.5"/>
    </g>
    <text x="980" y="530.8" font-family="'Liberation Sans',sans-serif" font-size="15.6" fill="#e2403f" textLength="91.2" lengthAdjust="spacingAndGlyphs">www.cnmhg.com</text>
    <!-- bottom-left widget -->
    <path d="M0,517 H8 Q11,517 11,520 V540 H0 Z" fill="#e9e9ea" opacity="0.8"/>
    <path d="M0,518.2 H6.8 Q8.9,518.2 8.9,520.4 V540 H0 Z" fill="#4b4e57"/>
    <g fill="#d9a24a">
      <rect x="2" y="526.4" width="3.2" height="1.3" fill="#b86a4a"/>
      <rect x="2" y="528.2" width="3.2" height="1.3"/>
      <rect x="2" y="530" width="3.2" height="1.3"/>
      <rect x="2" y="531.8" width="3.2" height="1.3"/>
      <rect x="2" y="533.6" width="3.2" height="1.3"/>
      <rect x="2" y="535.4" width="3.2" height="1.3"/>
      <rect x="2" y="537.2" width="3.2" height="1.3"/>
      <rect x="2" y="539" width="3.2" height="1"/>
    </g>
  </svg>
</div>
</body>
</html>
